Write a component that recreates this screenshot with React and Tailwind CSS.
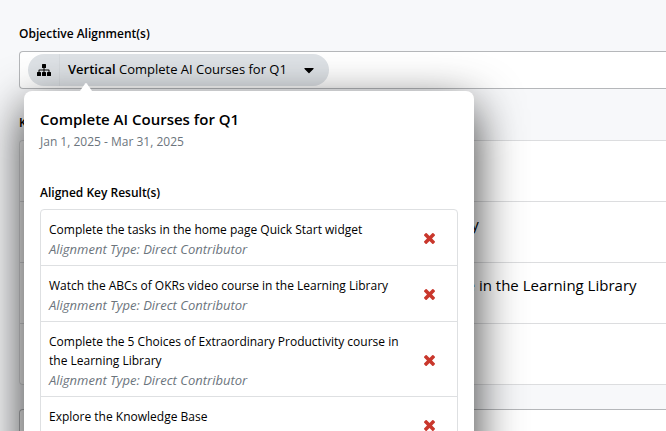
import React from "react";
import { FaCaretDown } from "react-icons/fa";

const results = [
  { title: "Complete the tasks in the home page Quick Start widget", type: "Direct Contributor" },
  { title: "Watch the ABCs of OKRs video course in the Learning Library", type: "Direct Contributor" },
  { title: "Complete the 5 Choices of Extraordinary Productivity course in the Learning Library", type: "Direct Contributor" },
  { title: "Explore the Knowledge Base", type: "Direct Contributor" },
];

function SitemapIcon() {
  return (
    <svg width="14" height="12" viewBox="0 0 14 12" fill="currentColor" aria-hidden="true">
      <rect x="5" y="0" width="4" height="4" rx="0.5" />
      <rect x="0" y="8" width="4" height="4" rx="0.5" />
      <rect x="5" y="8" width="4" height="4" rx="0.5" />
      <rect x="10" y="8" width="4" height="4" rx="0.5" />
      <path d="M1.5 8V6.2q0-.8.8-.8h4.2V4h1v1.4h4.2q.8 0 .8.8V8h-1V6.4h-4V8h-1V6.4h-4V8z" />
    </svg>
  );
}

function RemoveIcon() {
  return (
    <svg width="11" height="11" viewBox="302 366 1188 1188" fill="currentColor" aria-hidden="true">
      <path d="M1490 1322q0 40-28 68l-136 136q-28 28-68 28t-68-28l-294-294-294 294q-28 28-68 28t-68-28l-136-136q-28-28-28-68t28-68l294-294-294-294q-28-28-28-68t28-68l136-136q28-28 68-28t68 28l294 294 294-294q28-28 68-28t68 28l136 136q28 28 28 68t-28 68l-294 294 294 294q28 28 28 68z" />
    </svg>
  );
}

function AlignmentPopover() {
  return (
    <div
      role="dialog"
      aria-labelledby="popover-title"
      className="absolute top-[39px] left-1 z-10 w-[450px] rounded-lg bg-white px-4 pt-4 pb-4 text-xs shadow-[0_16px_48px_rgba(0,0,0,0.8)]"
    >
      <svg className="absolute -top-2 left-14 h-2 w-3" viewBox="0 0 12 8" aria-hidden="true">
        <path d="M0 8 5.2.6q.8-1 1.6 0L12 8z" fill="#fff" />
      </svg>
      <h2 id="popover-title" className="text-[15px] leading-6 font-semibold text-black">
        Complete AI Courses for Q1
      </h2>
      <p className="leading-[22px] text-[#6c757d]">Jan 1, 2025 - Mar 31, 2025</p>
      <h3 className="mt-[30px] leading-5 font-semibold text-black">Aligned Key Result(s)</h3>
      <ul className="mt-1.5 rounded border border-[#dee0e2]">
        {results.map((r) => (
          <li key={r.title} className="flex items-center border-b border-[#dee0e2] pt-2.5 pb-1.5 pl-2 last:border-b-0">
            <div className="w-[360px]">
              <p className="leading-[19px] text-black">{r.title}</p>
              <p className="text-[13px] leading-5 text-[#6c757d] italic">Alignment Type: {r.type}</p>
            </div>
            <button type="button" aria-label="Remove alignment" className="ml-[15px] pb-0.5 text-[#c9372c]">
              <RemoveIcon />
            </button>
          </li>
        ))}
      </ul>
    </div>
  );
}

export default function App() {
  return (
    <main className="h-screen overflow-hidden bg-[#f7f8fa] pt-6 pl-[19px] font-['Open_Sans','Noto_Sans',sans-serif] text-xs text-black">
      <h2 className="leading-5 font-semibold">Objective Alignment(s)</h2>
      <div className="relative mt-[7px] flex h-[38px] items-center rounded-l border border-r-0 border-[#b5b7ba] bg-white pl-2">
        <button type="button" className="flex h-8 items-center rounded-full bg-[#dee2e6] pr-3 pl-[9px] text-[13px]">
          <SitemapIcon />
          <span className="ml-2 h-full border-l border-[#d6dade]" />
          <span className="ml-2">
            <strong className="font-semibold">Vertical</strong> Complete AI Courses for Q1
          </span>
          <FaCaretDown size={16} className="ml-3.5" />
        </button>
        <AlignmentPopover />
      </div>
      <h2 className="mt-6 leading-5 font-semibold">Key Results</h2>
      <ul className="mt-[7px] rounded-l border border-r-0 border-[#dcdddf] bg-white text-[15px]">
        {results.map((r) => (
          <li
            key={r.title}
            className="flex h-[61px] items-start border-b border-[#dcdddf] pt-2.5 pl-[35px] leading-6 whitespace-nowrap last:h-[60px] last:border-b-0"
          >
            {r.title}
          </li>
        ))}
      </ul>
      <div className="mt-6 h-24 rounded-l border border-r-0 border-[#b5b7ba] bg-white" />
    </main>
  );
}
